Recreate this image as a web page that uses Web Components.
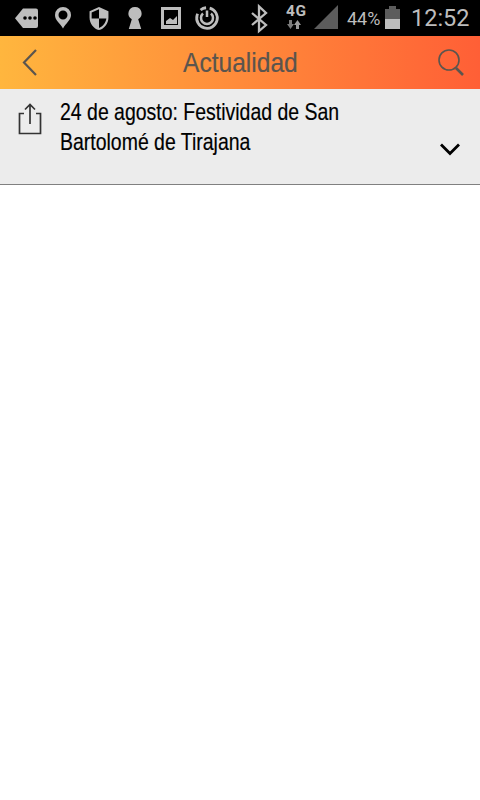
<!DOCTYPE html>
<html><head><meta charset="utf-8"><style>
html,body{margin:0;padding:0;background:#fff}
body{width:480px;height:800px;overflow:hidden;font-family:"Liberation Sans",sans-serif}
</style></head><body>
<app-status></app-status>
<app-bar title="Actualidad"></app-bar>
<news-row>24 de agosto: Festividad de San<br>Bartolomé de Tirajana</news-row>
<script>
class AppStatus extends HTMLElement{constructor(){super();this.attachShadow({mode:'open'}).innerHTML=`<style>
:host{display:block;height:36px;background:#000;color:#bdbdbd}
svg{display:block;width:480px;height:36px;position:absolute;left:0;top:0}
.wrap{position:relative;width:480px;height:36px}
.t{position:absolute;font-family:Roboto,sans-serif;white-space:nowrap}
</style><div class="wrap">
<svg viewBox="0 0 480 36" fill="#bdbdbd">
<path d="M23 8.500h13a2 2 0 0 1 2 2v15.500a2 2 0 0 1-2 2H23l-8-9.700z"/><g fill="#000"><circle cx="25" cy="18" r="1.800"/><circle cx="30" cy="18" r="1.800"/><circle cx="35" cy="18" r="1.800"/></g>
<path fill-rule="evenodd" d="M63 7a8 8 0 0 1 8 8c0 5-5 8-8 13.500c-3-5.500-8-8-8-13.500a8 8 0 0 1 8-8zm0 3.500a4.500 4.500 0 1 0 0 9a4.500 4.500 0 0 0 0-9z"/>
<path transform="translate(86.400 5.900) scale(1.050)" d="M12 1L3 5v6c0 5.550 3.840 10.740 9 12 5.160-1.260 9-6.450 9-12V5l-9-4zm0 10.990h7c-.530 4.120-3.280 7.790-7 8.940V12H5V6.300l7-3.110v8.800z"/>
<path d="M135 7a6.500 6.500 0 0 1 3.200 12.200l3 9.800h-12.400l3-9.800a6.500 6.500 0 0 1 3.200-12.200z"/>
<path fill-rule="evenodd" d="M161 7h20v22h-20zM164 10v15h14v-15z"/><path d="M166 24v-3l4-3l3 2l4-4v8z"/>
<g fill="none" stroke="#bdbdbd" stroke-width="2.800"><circle cx="207" cy="18" r="10.300" stroke-dasharray="50 4.700 6 4" transform="rotate(-75 207 18)"/><path stroke-width="2.500" d="M203 13.500a6 6 0 1 0 8 0"/><path stroke-width="2.500" d="M207 10.500v6.500"/></g>
<path fill="none" stroke="#bdbdbd" stroke-width="2.300" d="M252 13L266 25L259 31V6.500L266 13L252 25"/>
<path fill="#7a7a7a" d="M289 20h3v4h2l-3.500 5l-3.500-5h2z"/><path fill="#9a9a9a" d="M296 29v-4h-2l3.500-5l3.500 5h-2v4z"/>
<path fill="#5c5c5c" d="M338 5v24h-24z"/>
<path fill="#5c5c5c" d="M385 9h15v10h-15zM389 6h7v3h-7z"/><path d="M385 19h15v10h-15z"/>
</svg>
<span class="t" style="left:286px;top:3px;font-size:15.500px;font-weight:700;line-height:16px;letter-spacing:.5px">4G</span>
<span class="t" style="left:347px;top:9px;font-size:18px;line-height:20px">44%</span>
<span class="t" style="left:411px;top:3px;font-size:23.500px;line-height:30px">12:52</span>
</div>`}}
class AppBar extends HTMLElement{constructor(){super();this.attachShadow({mode:'open'}).innerHTML=`<style>
:host{display:flex;height:53px;align-items:center;justify-content:space-between;background:linear-gradient(90deg,#ffb63e,#ff5f36)}
h1{margin:0;font:400 28px/1 "Liberation Sans",sans-serif;color:#5b554e;transform:scaleX(.877);white-space:nowrap;-webkit-text-stroke:.2px #5b554e}
svg{display:block;flex:none}
</style><svg width="60" height="53" viewBox="0 0 60 53"><path d="M36 14L24 26.500L36 39" fill="none" stroke="#5b554e" stroke-width="2.200"/></svg>
<h1>${this.getAttribute('title')}</h1>
<svg width="60" height="53" viewBox="0 0 60 53"><circle cx="29" cy="24" r="10" fill="none" stroke="#5b554e" stroke-width="1.600"/><path d="M36 32l7 7" stroke="#5b554e" stroke-width="2.600" fill="none"/></svg>`}}
class NewsRow extends HTMLElement{constructor(){super();this.attachShadow({mode:'open'}).innerHTML=`<style>
:host{display:flex;height:96px;box-sizing:border-box;background:#ececec;border-bottom:1px solid #808080;color:#000}
.s{flex:none;width:60px}
svg{display:block}
.x{flex:1;min-width:0;font-size:24px;line-height:30px;padding-top:8px;white-space:nowrap;transform:scaleX(.811);transform-origin:0 0;-webkit-text-stroke:.2px #000}
.c{flex:none;width:60px;padding-top:54px}
</style><div class="s"><svg width="60" height="60" viewBox="0 0 60 60"><path d="M24 24.500H19.500V44.500H40.500V24.500H36M30 35V15.500M25 20.500L30 15.500L35 20.500" fill="none" stroke="#333" stroke-width="1.700"/></svg></div>
<div class="x"><slot></slot></div>
<div class="c"><svg width="60" height="14" viewBox="0 0 60 14"><path d="M21 1.500L30 10.500L39 1.500" fill="none" stroke="#000" stroke-width="2.800"/></svg></div>`}}
customElements.define('app-status',AppStatus);customElements.define('app-bar',AppBar);customElements.define('news-row',NewsRow);
</script></body></html>
